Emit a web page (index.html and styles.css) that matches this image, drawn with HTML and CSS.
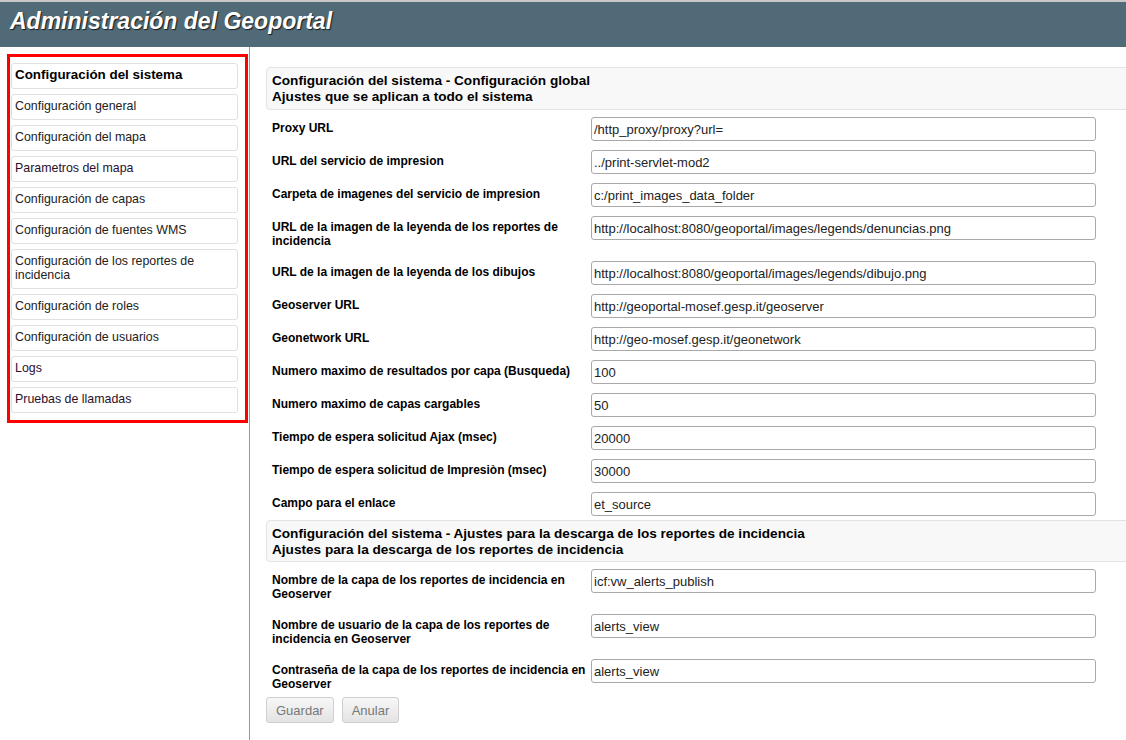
FILE: index.html
```html
<!DOCTYPE html>
<html lang="es">
<head>
<meta charset="utf-8">
<title>Administración del Geoportal</title>
<link rel="stylesheet" href="styles.css">
</head>
<body>
<header class="topbar">
  <h1 class="title">Administración del Geoportal</h1>
</header>
<div class="layout">
  <aside class="sidebar">
    <nav class="menu">
      <a class="menu-item menu-item-active">Configuración del sistema</a>
      <a class="menu-item">Configuración general</a>
      <a class="menu-item">Configuración del mapa</a>
      <a class="menu-item visited">Parametros del mapa</a>
      <a class="menu-item">Configuración de capas</a>
      <a class="menu-item">Configuración de fuentes WMS</a>
      <a class="menu-item">Configuración de los reportes de incidencia</a>
      <a class="menu-item">Configuración de roles</a>
      <a class="menu-item">Configuración de usuarios</a>
      <a class="menu-item visited">Logs</a>
      <a class="menu-item visited">Pruebas de llamadas</a>
    </nav>
  </aside>
  <main class="content">
    <div class="section-head">Configuración del sistema - Configuración global<br>Ajustes que se aplican a todo el sistema</div>
    <div class="row"><label class="label">Proxy URL</label><input class="field" value="/http_proxy/proxy?url="></div>
    <div class="row"><label class="label">URL del servicio de impresion</label><input class="field" value="../print-servlet-mod2"></div>
    <div class="row"><label class="label">Carpeta de imagenes del servicio de impresion</label><input class="field" value="c:/print_images_data_folder"></div>
    <div class="row"><label class="label">URL de la imagen de la leyenda de los reportes de incidencia</label><input class="field" value="http://localhost:8080/geoportal/images/legends/denuncias.png"></div>
    <div class="row"><label class="label">URL de la imagen de la leyenda de los dibujos</label><input class="field" value="http://localhost:8080/geoportal/images/legends/dibujo.png"></div>
    <div class="row"><label class="label">Geoserver URL</label><input class="field" value="http://geoportal-mosef.gesp.it/geoserver"></div>
    <div class="row"><label class="label">Geonetwork URL</label><input class="field" value="http://geo-mosef.gesp.it/geonetwork"></div>
    <div class="row"><label class="label">Numero maximo de resultados por capa (Busqueda)</label><input class="field" value="100"></div>
    <div class="row"><label class="label">Numero maximo de capas cargables</label><input class="field" value="50"></div>
    <div class="row"><label class="label">Tiempo de espera solicitud Ajax (msec)</label><input class="field" value="20000"></div>
    <div class="row"><label class="label">Tiempo de espera solicitud de Impresiòn (msec)</label><input class="field" value="30000"></div>
    <div class="row"><label class="label">Campo para el enlace</label><input class="field" value="et_source"></div>
    <div class="section-head section-head-next">Configuración del sistema - Ajustes para la descarga de los reportes de incidencia<br>Ajustes para la descarga de los reportes de incidencia</div>
    <div class="row"><label class="label">Nombre de la capa de los reportes de incidencia en Geoserver</label><input class="field" value="icf:vw_alerts_publish"></div>
    <div class="row"><label class="label">Nombre de usuario de la capa de los reportes de incidencia en Geoserver</label><input class="field" value="alerts_view"></div>
    <div class="row"><label class="label">Contraseña de la capa de los reportes de incidencia en Geoserver</label><input class="field" value="alerts_view"></div>
    <div class="actions">
      <button class="btn">Guardar</button>
      <button class="btn">Anular</button>
    </div>
  </main>
</div>
</body>
</html>
```
FILE: styles.css
```css
html, body {
  margin: 0;
  padding: 0;
}
body {
  font-family: "Liberation Sans", Arial, sans-serif;
  color: #000;
  background: #fff;
  overflow: hidden;
}
.topbar {
  border-top: 2px solid #c8c8c8;
  background: #506a78;
  height: 45px;
  box-sizing: content-box;
}
.title {
  margin: 0;
  padding: 6px 0 0 10px;
  font-size: 23px;
  line-height: 27px;
  font-weight: bold;
  font-style: italic;
  color: #fff;
  text-shadow: 1px 1px 1px #1a1a1a;
}
.layout {
  display: grid;
  grid-template-columns: 250px 1fr;
  min-height: calc(100vh - 47px);
}
.sidebar {
  border-right: 1px solid #9a9a9a;
  padding: 7px 0 0 7px;
}
.menu {
  border: 3px solid #f00;
  padding: 6px 7px 2px 1px;
  display: flex;
  flex-direction: column;
  box-sizing: content-box;
  width: 227px;
}
.menu-item {
  display: block;
  border: 1px solid #e0e0e0;
  border-radius: 3px;
  padding: 4px 4px 6px 3px;
  margin-bottom: 5px;
  font-size: 12.4px;
  line-height: 14px;
  color: #222;
  text-decoration: none;
}
.menu-item-active {
  font-weight: bold;
  font-size: 13.4px;
  color: #000;
}
.menu-item.visited {
  color: #2a0f2e;
}
.content {
  padding: 20px 0 0 16px;
  min-width: 0;
}
.section-head {
  border: 1px solid #e3e3e3;
  border-radius: 4px;
  background: #f8f8f8;
  padding: 5px 5px 4px;
  margin-right: -6px;
  font-size: 13.6px;
  line-height: 16px;
  font-weight: bold;
  color: #000;
}
.section-head-next {
  margin-top: 2px;
  padding-bottom: 3px;
}
.row {
  display: grid;
  grid-template-columns: 319px 505px;
  align-items: start;
  padding: 7px 0 2px 6px;
}
.label {
  padding: 4px 5px 4px 0;
  font-size: 12px;
  line-height: 14px;
  font-weight: bold;
  color: #000;
}
.field {
  box-sizing: border-box;
  width: 505px;
  height: 24px;
  margin: 0;
  border: 1px solid #a9a9a9;
  border-radius: 3px;
  padding: 0 2px;
  font-family: "Liberation Sans", Arial, sans-serif;
  font-size: 13px;
  color: #222;
  background: #fff;
}
.actions {
  display: flex;
  gap: 8px;
  margin-top: 0;
}
.btn {
  height: 26px;
  padding: 0 9px;
  border: 1px solid #cfcfcf;
  border-radius: 3px;
  background: linear-gradient(#f7f7f7, #e3e3e3);
  font-family: "Liberation Sans", Arial, sans-serif;
  font-size: 13px;
  color: #777;
}
```
